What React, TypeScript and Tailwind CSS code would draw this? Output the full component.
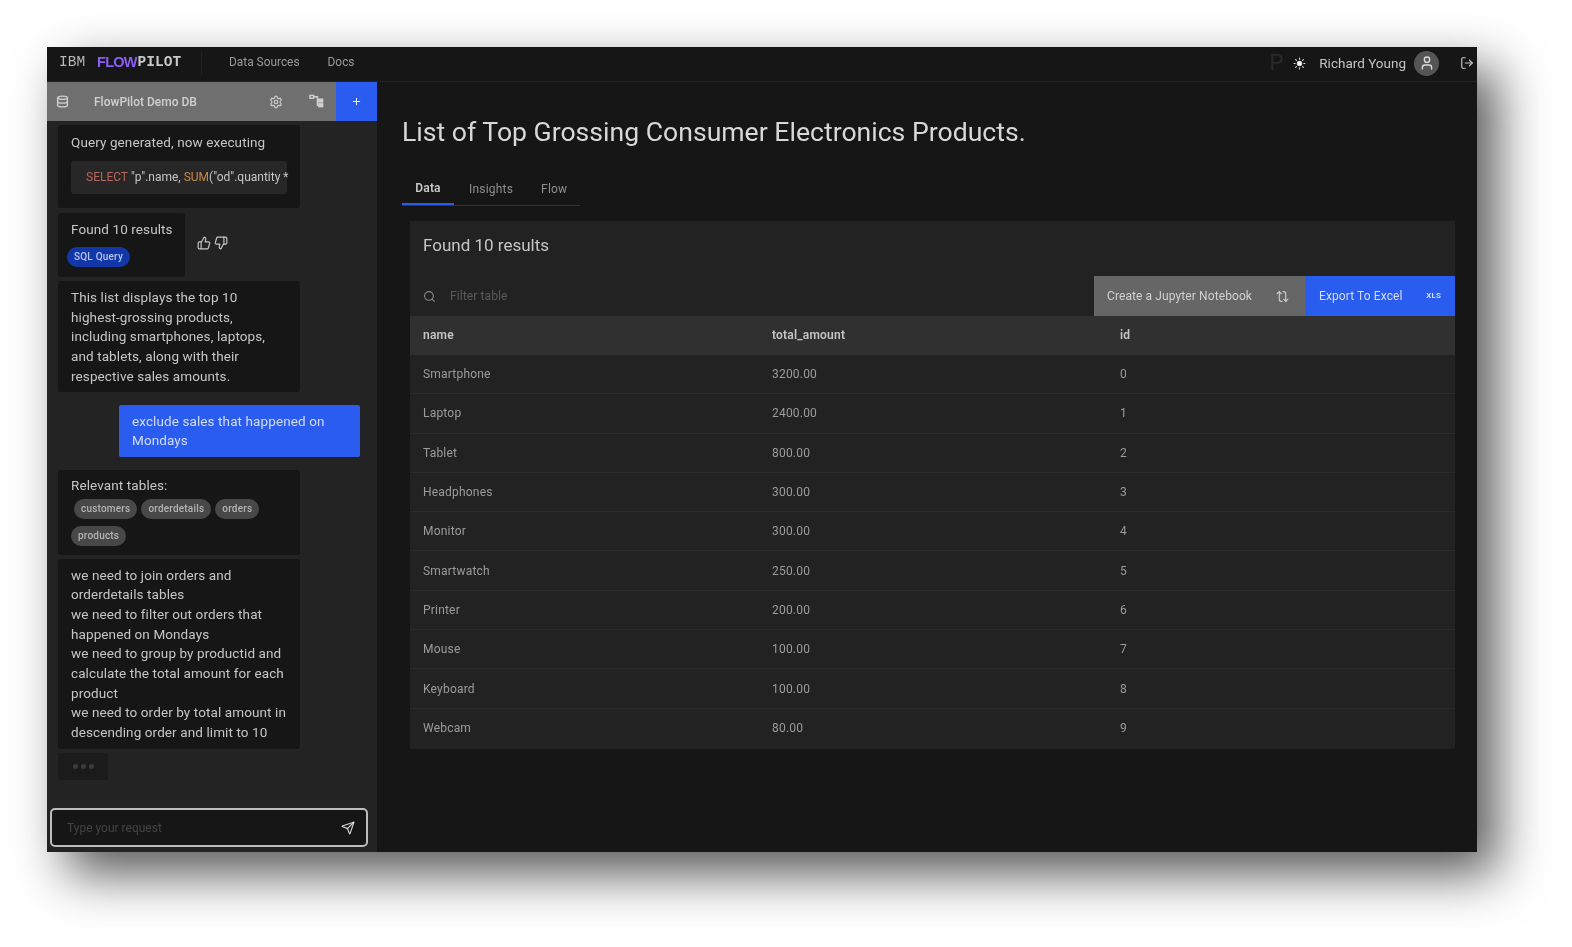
import { Database, Settings, Plus, ThumbsUp, ThumbsDown, Search, Send, Sun, User, LogOut, Repeat } from "lucide-react";

const rows: [string, string, number][] = [
  ["Smartphone", "3200.00", 0],
  ["Laptop", "2400.00", 1],
  ["Tablet", "800.00", 2],
  ["Headphones", "300.00", 3],
  ["Monitor", "300.00", 4],
  ["Smartwatch", "250.00", 5],
  ["Printer", "200.00", 6],
  ["Mouse", "100.00", 7],
  ["Keyboard", "100.00", 8],
  ["Webcam", "80.00", 9],
];

function Tree() {
  return (
    <svg width="15" height="15" viewBox="0 0 16 16" fill="none" stroke="currentColor" strokeWidth="1.5">
      <rect x="1" y="1.5" width="4" height="3" />
      <path d="M5 3h4v9h1M9 7h1" />
      <rect x="10.5" y="5.5" width="4" height="3" fill="currentColor" />
      <rect x="10.5" y="10.5" width="4" height="3" fill="currentColor" />
    </svg>
  );
}

function Pill({ children }: { children: string }) {
  return (
    <span className="inline-flex h-[20px] items-center rounded-full bg-[#484848] px-[7px] text-[10px] font-medium tracking-[0.2px] text-[#b4b4b4]">
      {children}
    </span>
  );
}

export default function App() {
  return (
    <div className="h-[947px] w-[1572px] overflow-hidden bg-white pl-[47px] pt-[47px] [font-family:'Roboto','Noto_Sans',sans-serif]">
      <div className="flex h-[805px] w-[1430px] flex-col bg-[#161616] shadow-[20px_22px_48px_0px_rgba(0,0,0,0.66)]">
        <header className="flex h-[35px] shrink-0 items-center border-b border-[#222222] pb-[2px] blur-[0.4px]">
          <div className="flex w-[154px] items-center pl-[12px] text-[14.5px] [font-family:'Liberation_Mono',monospace]">
            <span className="text-[#b8b8b8]">IBM</span>
            <span className="ml-[12px] font-bold tracking-[-0.8px] text-[#8b5cf6] [font-family:'Liberation_Sans',sans-serif]">FLOW</span>
            <span className="ml-[1px] font-bold text-[#c8c8c8]">PILOT</span>
          </div>
          <div className="h-[24px] w-px bg-[#222222]" />
          <nav className="ml-[27px] flex gap-[28px] text-[11.9px] text-[#9a9a9a]">
            <span>Data Sources</span>
            <span>Docs</span>
          </nav>
          <div className="ml-auto flex items-center pr-[3px]">
            <span className="text-[22px] leading-none text-[#2a2a2a]">P</span>
            <Sun size={13} className="ml-[10px] fill-white text-[#dddddd]" />
            <span className="ml-[13px] text-[13.5px] text-[#c4c4c4]">Richard Young</span>
            <span className="ml-[8px] flex h-[25px] w-[25px] items-center justify-center rounded-full bg-[#555555]">
              <User size={16} className="text-[#dddddd]" />
            </span>
            <LogOut size={14} className="ml-[21px] text-[#c8c8c8]" />
          </div>
        </header>
        <div className="flex min-h-0 flex-1">
          <aside className="flex w-[330px] shrink-0 flex-col bg-[#232323]">
            <div className="flex h-[39px] shrink-0 items-center bg-[#6f6f6f] text-[#d0d0d0] blur-[0.4px]">
              <Database size={13} strokeWidth={2.6} className="ml-[9px] shrink-0" />
              <span className="ml-[25px] w-[106px] whitespace-nowrap text-[12px] font-medium">FlowPilot Demo DB</span>
              <Settings size={14} className="ml-[72px] shrink-0" />
              <span className="ml-[26px]"><Tree /></span>
              <span className="ml-[12px] flex h-full w-[41px] shrink-0 items-center justify-center bg-[#2a5cf0]">
                <Plus size={11} className="text-white" />
              </span>
            </div>
            <div className="min-h-0 flex-1 overflow-hidden px-[11px] pt-[4px] text-[13.5px] leading-[19.7px] tracking-[0.1px] text-[#c6c6c6] blur-[0.4px]">
              <div className="h-[83px] w-[242px] rounded-[3px] bg-[#161616] px-[13px] pt-[8px]">
                <p>Query generated, now executing</p>
                <div className="mt-[8px] flex h-[33px] items-center whitespace-nowrap rounded-[3px] bg-[#272727] pl-[15px] pt-[2px] text-[12px] tracking-normal text-[#c6c6c6]">
                  <span className="text-[#b5685c]">SELECT</span>&nbsp;"p".name,&nbsp;<span className="text-[#c98a4b]">SUM</span>("od".quantity *
                </div>
              </div>
              <div className="mt-[5px] flex items-center">
                <div className="h-[64px] w-[127px] rounded-[3px] bg-[#161616] pl-[13px] pt-[7px]">
                  <p>Found 10 results</p>
                  <span className="-ml-[4px] mt-[7px] flex h-[20px] w-[63px] items-center justify-center rounded-full bg-[#1237a8] text-[10px] font-medium tracking-[0.2px] text-[#b8c6f0]">SQL Query</span>
                </div>
                <ThumbsUp size={14} className="mb-[4px] ml-[12px]" />
                <ThumbsDown size={14} className="mb-[4px] ml-[3px]" />
              </div>
              <div className="mt-[4px] h-[111px] w-[242px] rounded-[3px] bg-[#161616] py-[7px] pl-[13px] pr-[24px]">
                This list displays the top 10 highest-grossing products, including smartphones, laptops, and tablets, along with their respective sales amounts.
              </div>
              <div className="ml-[61px] mt-[12.5px] h-[52px] w-[241px] rounded-[2px] bg-[#2a5cf0] px-[13px] py-[7px] text-[#d3dcf8]">
                exclude sales that happened on Mondays
              </div>
              <div className="mt-[13px] h-[85px] w-[242px] rounded-[3px] bg-[#161616] px-[13px] pt-[6px]">
                <p>Relevant tables:</p>
                <div className="mt-[4px] flex flex-wrap gap-x-[4px] gap-y-[6px] pl-[3px]">
                  <Pill>customers</Pill>
                  <Pill>orderdetails</Pill>
                  <Pill>orders</Pill>
                  <span className="-ml-[3px] w-full"><Pill>products</Pill></span>
                </div>
              </div>
              <div className="mt-[4px] w-[242px] rounded-[3px] bg-[#161616] px-[13px] pb-[6px] pt-[7px]">
                <p>we need to join orders and orderdetails tables</p>
                <p>we need to filter out orders that happened on Mondays</p>
                <p>we need to group by productid and calculate the total amount for each product</p>
                <p>we need to order by total amount in descending order and limit to 10</p>
              </div>
              <div className="mt-[4px] flex h-[27px] w-[50px] items-center justify-center gap-[3px] rounded-[2px] bg-[#1b1b1b]">
                <i className="h-[5px] w-[5px] rounded-full bg-[#3c3c3c]" />
                <i className="h-[5px] w-[5px] rounded-full bg-[#3c3c3c]" />
                <i className="h-[5px] w-[5px] rounded-full bg-[#3c3c3c]" />
              </div>
            </div>
            <div className="mb-[5px] ml-[3px] mr-[9px] flex h-[39px] shrink-0 items-center rounded-[5px] border-2 border-[#bdbdbd] bg-[#161616] pl-[15px] pr-[11px] blur-[0.3px]">
              <span className="text-[12px] text-[#444444]">Type your request</span>
              <Send size={14} className="ml-auto text-[#d6d6d6]" />
            </div>
          </aside>
          <main className="min-w-0 flex-1 pl-[25px] pr-[22px] blur-[0.4px]">
            <h1 className="mt-[32px] text-[26.6px] leading-[36px] text-[#d8d8d8]">List of Top Grossing Consumer Electronics Products.</h1>
            <div className="mt-[22px] flex h-[34px] w-[178px] border-b border-[#333333] text-[12px] tracking-[0.2px]">
              <span className="flex w-[52px] items-center justify-center border-b-2 border-[#2a5cf0] font-semibold text-[#c8c8c8]">Data</span>
              <span className="ml-[15px] flex items-center text-[#8f8f8f]">Insights</span>
              <span className="ml-[28px] flex items-center text-[#8f8f8f]">Flow</span>
            </div>
            <section className="ml-[8px] mt-[15px] bg-[#222222] pb-[1px]">
              <h2 className="flex h-[55px] items-center px-[13px] pb-[5px] text-[17px] text-[#c6c6c6]">Found 10 results</h2>
              <div className="flex h-[40px] items-center text-[12px] tracking-[0.1px]">
                <Search size={13} className="ml-[13px] text-[#8a8a8a]" />
                <span className="ml-[14px] text-[#5a5a5a]">Filter table</span>
                <div className="ml-auto flex h-full w-[211px] items-center bg-[#666666] pl-[13px] pr-[16px] text-[#d0d0d0]">
                  Create a Jupyter Notebook
                  <Repeat size={13} className="ml-auto rotate-90" />
                </div>
                <div className="flex h-full w-[150px] items-center bg-[#2a5cf0] pl-[14px] pr-[14px] text-[#d3dcf8]">
                  Export To Excel
                  <span className="ml-auto text-[8px] font-bold">XLS</span>
                </div>
              </div>
              <div className="grid h-[39px] grid-cols-[349px_348px_1fr] items-center bg-[#303030] px-[13px] pb-[1px] text-[12px] font-semibold tracking-[0.2px] text-[#c6c6c6]">
                <span>name</span>
                <span>total_amount</span>
                <span>id</span>
              </div>
              {rows.map(([name, amount, id]) => (
                <div key={id} className="grid h-[39.3px] grid-cols-[349px_348px_1fr] items-center border-b border-[#2b2b2b] px-[13px] text-[12px] tracking-[0.2px] text-[#9c9c9c] last:border-b-0">
                  <span>{name}</span>
                  <span>{amount}</span>
                  <span>{id}</span>
                </div>
              ))}
            </section>
          </main>
        </div>
      </div>
    </div>
  );
}
